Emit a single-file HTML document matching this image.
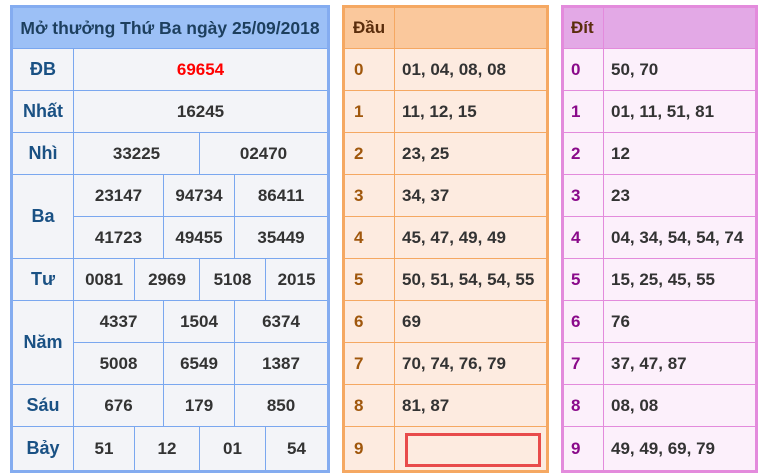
<!DOCTYPE html>
<html><head><meta charset="utf-8"><style>
body{margin:0;width:767px;height:475px;background:#fff;font-family:"Liberation Sans",sans-serif;font-weight:bold;font-size:17px;position:relative;overflow:hidden}
.b{position:absolute;box-sizing:border-box}
.c{position:absolute;box-sizing:border-box;display:flex;align-items:center;justify-content:center;color:#333}
.L .c{border-right:1px solid #7aa7ef;border-bottom:1px solid #7aa7ef;background:#f3f4f8}
.lab{color:#1a5184!important;font-size:18px}
.M .c,.R .c{justify-content:flex-start}
.M .c{border-right:1px solid #f5a862;border-bottom:1px solid #f5a862;background:#fdebe0}
.R .c{border-right:1px solid #e38bdc;border-bottom:1px solid #e38bdc;background:#fcf0fb}
</style></head><body>
<div class="L">
<div class="b" style="left:10px;top:5px;width:320px;height:468px;border:3px solid #84acf0;background:#f3f4f8"></div>
<div class="c" style="left:13px;top:8px;width:314px;height:41px;background:#9cc0f6;border-right:none;color:#1d3f5e;font-size:17.5px">Mở thưởng Thứ Ba ngày 25/09/2018</div>
<div class="c lab" style="left:13px;top:49px;width:61px;height:42px">ĐB</div>
<div class="c" style="left:74px;top:49px;width:253px;height:42px;color:#f00;border-right:none">69654</div>
<div class="c lab" style="left:13px;top:91px;width:61px;height:42px">Nhất</div>
<div class="c" style="left:74px;top:91px;width:253px;height:42px;border-right:none">16245</div>
<div class="c lab" style="left:13px;top:133px;width:61px;height:42px">Nhì</div>
<div class="c" style="left:74px;top:133px;width:126px;height:42px">33225</div>
<div class="c" style="left:200px;top:133px;width:127px;height:42px;border-right:none">02470</div>
<div class="c lab" style="left:13px;top:175px;width:61px;height:84px">Ba</div>
<div class="c" style="left:74px;top:175px;width:90px;height:42px">23147</div>
<div class="c" style="left:164px;top:175px;width:71px;height:42px">94734</div>
<div class="c" style="left:235px;top:175px;width:92px;height:42px;border-right:none">86411</div>
<div class="c" style="left:74px;top:217px;width:90px;height:42px">41723</div>
<div class="c" style="left:164px;top:217px;width:71px;height:42px">49455</div>
<div class="c" style="left:235px;top:217px;width:92px;height:42px;border-right:none">35449</div>
<div class="c lab" style="left:13px;top:259px;width:61px;height:42px">Tư</div>
<div class="c" style="left:74px;top:259px;width:61px;height:42px">0081</div>
<div class="c" style="left:135px;top:259px;width:65px;height:42px">2969</div>
<div class="c" style="left:200px;top:259px;width:66px;height:42px">5108</div>
<div class="c" style="left:266px;top:259px;width:61px;height:42px;border-right:none">2015</div>
<div class="c lab" style="left:13px;top:301px;width:61px;height:84px">Năm</div>
<div class="c" style="left:74px;top:301px;width:90px;height:42px">4337</div>
<div class="c" style="left:164px;top:301px;width:71px;height:42px">1504</div>
<div class="c" style="left:235px;top:301px;width:92px;height:42px;border-right:none">6374</div>
<div class="c" style="left:74px;top:343px;width:90px;height:42px">5008</div>
<div class="c" style="left:164px;top:343px;width:71px;height:42px">6549</div>
<div class="c" style="left:235px;top:343px;width:92px;height:42px;border-right:none">1387</div>
<div class="c lab" style="left:13px;top:385px;width:61px;height:42px">Sáu</div>
<div class="c" style="left:74px;top:385px;width:90px;height:42px">676</div>
<div class="c" style="left:164px;top:385px;width:71px;height:42px">179</div>
<div class="c" style="left:235px;top:385px;width:92px;height:42px;border-right:none">850</div>
<div class="c lab" style="left:13px;top:427px;width:61px;height:43px;border-bottom:none">Bảy</div>
<div class="c" style="left:74px;top:427px;width:61px;height:43px;border-bottom:none">51</div>
<div class="c" style="left:135px;top:427px;width:65px;height:43px;border-bottom:none">12</div>
<div class="c" style="left:200px;top:427px;width:66px;height:43px;border-bottom:none">01</div>
<div class="c" style="left:266px;top:427px;width:61px;height:43px;border:none">54</div>
</div>

<div class="M">
<div class="b" style="left:342px;top:5px;width:207px;height:468px;border:3px solid #f5a862;background:#fdebe0"></div>
<div class="c" style="left:345px;top:8px;width:50px;height:41px;background:#fac89c;color:#5a2d0c;padding-left:8px">Đầu</div>
<div class="c" style="left:395px;top:8px;width:151px;height:41px;background:#fac89c;border-right:none"></div>
<div class="c" style="left:345px;top:49px;width:50px;height:42px;color:#a0570c;padding-left:9px">0</div><div class="c" style="left:395px;top:49px;width:151px;height:42px;border-right:none;padding-left:7px">01, 04, 08, 08</div>
<div class="c" style="left:345px;top:91px;width:50px;height:42px;color:#a0570c;padding-left:9px">1</div><div class="c" style="left:395px;top:91px;width:151px;height:42px;border-right:none;padding-left:7px">11, 12, 15</div>
<div class="c" style="left:345px;top:133px;width:50px;height:42px;color:#a0570c;padding-left:9px">2</div><div class="c" style="left:395px;top:133px;width:151px;height:42px;border-right:none;padding-left:7px">23, 25</div>
<div class="c" style="left:345px;top:175px;width:50px;height:42px;color:#a0570c;padding-left:9px">3</div><div class="c" style="left:395px;top:175px;width:151px;height:42px;border-right:none;padding-left:7px">34, 37</div>
<div class="c" style="left:345px;top:217px;width:50px;height:42px;color:#a0570c;padding-left:9px">4</div><div class="c" style="left:395px;top:217px;width:151px;height:42px;border-right:none;padding-left:7px">45, 47, 49, 49</div>
<div class="c" style="left:345px;top:259px;width:50px;height:42px;color:#a0570c;padding-left:9px">5</div><div class="c" style="left:395px;top:259px;width:151px;height:42px;border-right:none;padding-left:7px">50, 51, 54, 54, 55</div>
<div class="c" style="left:345px;top:301px;width:50px;height:42px;color:#a0570c;padding-left:9px">6</div><div class="c" style="left:395px;top:301px;width:151px;height:42px;border-right:none;padding-left:7px">69</div>
<div class="c" style="left:345px;top:343px;width:50px;height:42px;color:#a0570c;padding-left:9px">7</div><div class="c" style="left:395px;top:343px;width:151px;height:42px;border-right:none;padding-left:7px">70, 74, 76, 79</div>
<div class="c" style="left:345px;top:385px;width:50px;height:42px;color:#a0570c;padding-left:9px">8</div><div class="c" style="left:395px;top:385px;width:151px;height:42px;border-right:none;padding-left:7px">81, 87</div>
<div class="c" style="left:345px;top:427px;width:50px;height:43px;color:#a0570c;padding-left:9px;border-bottom:none">9</div><div class="c" style="left:395px;top:427px;width:151px;height:43px;border:none"></div>
<div class="b" style="left:405px;top:433px;width:136px;height:34px;border:3px solid #e84b4b"></div>
</div>
<div class="R">
<div class="b" style="left:561px;top:5px;width:197px;height:468px;border:3px solid #e38bdc;background:#fcf0fb"></div>
<div class="c" style="left:564px;top:8px;width:40px;height:41px;background:#e3a9e6;color:#5a2d0c;padding-left:7px">Đít</div>
<div class="c" style="left:604px;top:8px;width:151px;height:41px;background:#e3a9e6;border-right:none"></div>
<div class="c" style="left:564px;top:49px;width:40px;height:42px;color:#8a0a8a;padding-left:7px">0</div><div class="c" style="left:604px;top:49px;width:151px;height:42px;border-right:none;padding-left:7px">50, 70</div>
<div class="c" style="left:564px;top:91px;width:40px;height:42px;color:#8a0a8a;padding-left:7px">1</div><div class="c" style="left:604px;top:91px;width:151px;height:42px;border-right:none;padding-left:7px">01, 11, 51, 81</div>
<div class="c" style="left:564px;top:133px;width:40px;height:42px;color:#8a0a8a;padding-left:7px">2</div><div class="c" style="left:604px;top:133px;width:151px;height:42px;border-right:none;padding-left:7px">12</div>
<div class="c" style="left:564px;top:175px;width:40px;height:42px;color:#8a0a8a;padding-left:7px">3</div><div class="c" style="left:604px;top:175px;width:151px;height:42px;border-right:none;padding-left:7px">23</div>
<div class="c" style="left:564px;top:217px;width:40px;height:42px;color:#8a0a8a;padding-left:7px">4</div><div class="c" style="left:604px;top:217px;width:151px;height:42px;border-right:none;padding-left:7px">04, 34, 54, 54, 74</div>
<div class="c" style="left:564px;top:259px;width:40px;height:42px;color:#8a0a8a;padding-left:7px">5</div><div class="c" style="left:604px;top:259px;width:151px;height:42px;border-right:none;padding-left:7px">15, 25, 45, 55</div>
<div class="c" style="left:564px;top:301px;width:40px;height:42px;color:#8a0a8a;padding-left:7px">6</div><div class="c" style="left:604px;top:301px;width:151px;height:42px;border-right:none;padding-left:7px">76</div>
<div class="c" style="left:564px;top:343px;width:40px;height:42px;color:#8a0a8a;padding-left:7px">7</div><div class="c" style="left:604px;top:343px;width:151px;height:42px;border-right:none;padding-left:7px">37, 47, 87</div>
<div class="c" style="left:564px;top:385px;width:40px;height:42px;color:#8a0a8a;padding-left:7px">8</div><div class="c" style="left:604px;top:385px;width:151px;height:42px;border-right:none;padding-left:7px">08, 08</div>
<div class="c" style="left:564px;top:427px;width:40px;height:43px;color:#8a0a8a;padding-left:7px;border-bottom:none">9</div><div class="c" style="left:604px;top:427px;width:151px;height:43px;border:none;padding-left:7px">49, 49, 69, 79</div>
</div>
</body></html>
